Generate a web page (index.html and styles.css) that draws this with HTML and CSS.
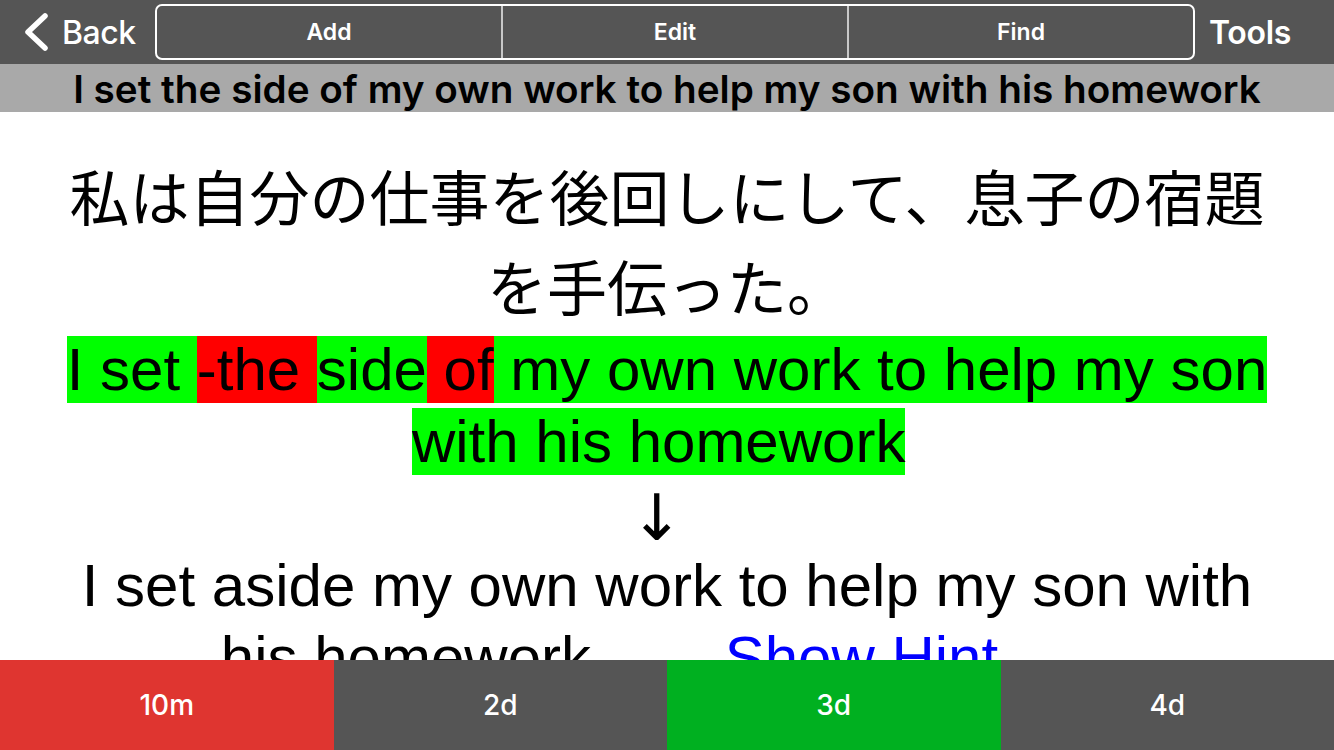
FILE: index.html
```html
<!DOCTYPE html>
<html lang="ja">
<head>
<meta charset="UTF-8">
<meta name="viewport" content="width=device-width, initial-scale=1.0">
<title>Review</title>
<link rel="stylesheet" href="styles.css">
</head>
<body>

<div class="app">
  <header class="topbar">
    <div class="back">
      <svg class="chevron" width="28" height="44" viewBox="0 0 28 44">
        <polyline points="23,6 6,22 23,38" fill="none" stroke="#fff" stroke-width="5.5" stroke-linecap="round" stroke-linejoin="round"/>
      </svg>
      <span>Back</span>
    </div>
    <div class="segments">
      <div class="seg">Add</div>
      <div class="seg">Edit</div>
      <div class="seg">Find</div>
    </div>
    <div class="tools">Tools</div>
  </header>

  <div class="subtitle">I set the side of my own work to help my son with his homework</div>

  <main class="card">
    <div class="jp">私は自分の仕事を後回しにして、息子の宿題を手伝った。</div>
    <div class="diff"><span class="ok">I set </span><span class="bad">-the </span><span class="ok">side</span><span class="bad"> of</span><span class="ok"> my own work to help my son with his homework</span>&nbsp;</div>
    <div class="arrow">↓&nbsp;</div>
    <div class="answer">I set aside my own work to help my son with his homework <span class="hint">Show Hint</span></div>
  </main>

  <footer class="grades">
    <div class="grade grade-again">10m</div>
    <div class="grade">2d</div>
    <div class="grade grade-good">3d</div>
    <div class="grade">4d</div>
  </footer>
</div>

</body>
</html>
```

FILE: styles.css
```css
body {
  margin: 0;
  padding: 0;
  background-color: #fff;
  font-family: "Liberation Sans", Arial, sans-serif;
  overflow: hidden;
}

.app {
  display: flex;
  flex-direction: column;
  height: 100vh;
}

/* barra superior */
.topbar {
  height: 64px;
  flex-shrink: 0;
  display: flex;
  align-items: center;
  padding-left: 22px;
  background-color: #555;
  color: white;
  font-family: Inter, "Noto Sans", sans-serif;
}

.back {
  display: flex;
  align-items: center;
  gap: 12px;
  width: 133px;
  font-size: 32px;
  font-weight: 500;
  letter-spacing: -0.5px;
}

.segments {
  display: flex;
  width: 1040px;
  height: 56px;
  box-sizing: border-box;
  border: 2px solid #fff;
  border-radius: 7px;
}

.seg {
  flex: 1;
  display: flex;
  align-items: center;
  justify-content: center;
  font-size: 23px;
  font-weight: 600;
  border-left: 2px solid #c8c8c8;
}

.seg:first-child {
  border-left: none;
}

.tools {
  margin-left: 14px;
  font-size: 32px;
  font-weight: 600;
  letter-spacing: -0.3px;
}

.subtitle {
  height: 48px;
  flex-shrink: 0;
  background-color: #a9a9a9;
  color: #000;
  text-align: center;
  font-family: Inter, "Noto Sans", sans-serif;
  font-size: 38.7px;
  font-weight: 600;
  line-height: 50px;
  white-space: nowrap;
}

/* tarjeta */
.card {
  flex: 1;
  overflow: hidden;
  padding: 38px 60px 0;
  text-align: center;
  color: #000;
}

.jp {
  font-family: "Noto Sans CJK JP", sans-serif;
  font-size: 60px;
  font-weight: 400;
  line-height: 90px;
  margin-bottom: 6px;
}

.diff,
.answer {
  font-size: 60px;
  line-height: 72px;
}

.diff {
  margin-top: -2px;
}

.ok {
  background-color: #00ff00;
}

.bad {
  background-color: #ff0000;
}

.arrow {
  height: 72px;
  font-family: "DejaVu Sans", sans-serif;
  font-size: 64px;
  line-height: 80px;
}

.hint {
  display: inline-block;
  margin: 0 115px 0 117px;
  color: #0000ff;
}

/* botones de abajo */
.grades {
  height: 90px;
  flex-shrink: 0;
  display: flex;
}

.grade {
  flex: 1;
  display: flex;
  align-items: center;
  justify-content: center;
  background-color: #555;
  color: white;
  font-family: Inter, "Noto Sans", sans-serif;
  font-size: 28px;
  font-weight: 500;
}

.grade-again {
  background-color: #df3530;
}

.grade-good {
  background-color: #00b020;
}
```
